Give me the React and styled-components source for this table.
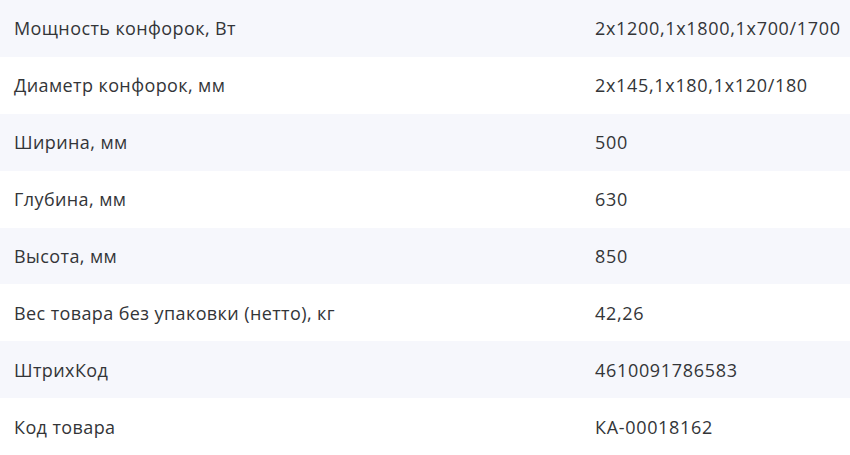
import React from 'react'
import styled, { createGlobalStyle } from 'styled-components'

const GlobalStyle = createGlobalStyle`
  body {
    margin: 0;
    background: #ffffff;
    font-family: "Open Sans", "Noto Sans", sans-serif;
  }
`

const Table = styled.div`
  display: flex;
  flex-direction: column;
  width: 850px;
`

const Row = styled.div`
  display: grid;
  grid-template-columns: 581px 1fr;
  align-items: center;
  height: 56.875px;
  padding-left: 14px;
  box-sizing: border-box;
  background: ${props => (props.$striped ? '#f6f7fc' : '#ffffff')};
`

const Cell = styled.div`
  font-size: 18px;
  line-height: 24px;
  letter-spacing: ${props => (props.$value ? '0.68px' : '0.4px')};
  color: #333538;
  white-space: nowrap;
`

const specs = [
  ['Мощность конфорок, Вт', '2x1200,1x1800,1x700/1700'],
  ['Диаметр конфорок, мм', '2x145,1x180,1x120/180'],
  ['Ширина, мм', '500'],
  ['Глубина, мм', '630'],
  ['Высота, мм', '850'],
  ['Вес товара без упаковки (нетто), кг', '42,26'],
  ['ШтрихКод', '4610091786583'],
  ['Код товара', 'КА-00018162']
]

export default function App() {
  return (
    <>
      <GlobalStyle />
      <Table>
        {specs.map(([name, value], i) => (
          <Row key={name} $striped={i % 2 === 0}>
            <Cell>{name}</Cell>
            <Cell $value>{value}</Cell>
          </Row>
        ))}
      </Table>
    </>
  )
}
